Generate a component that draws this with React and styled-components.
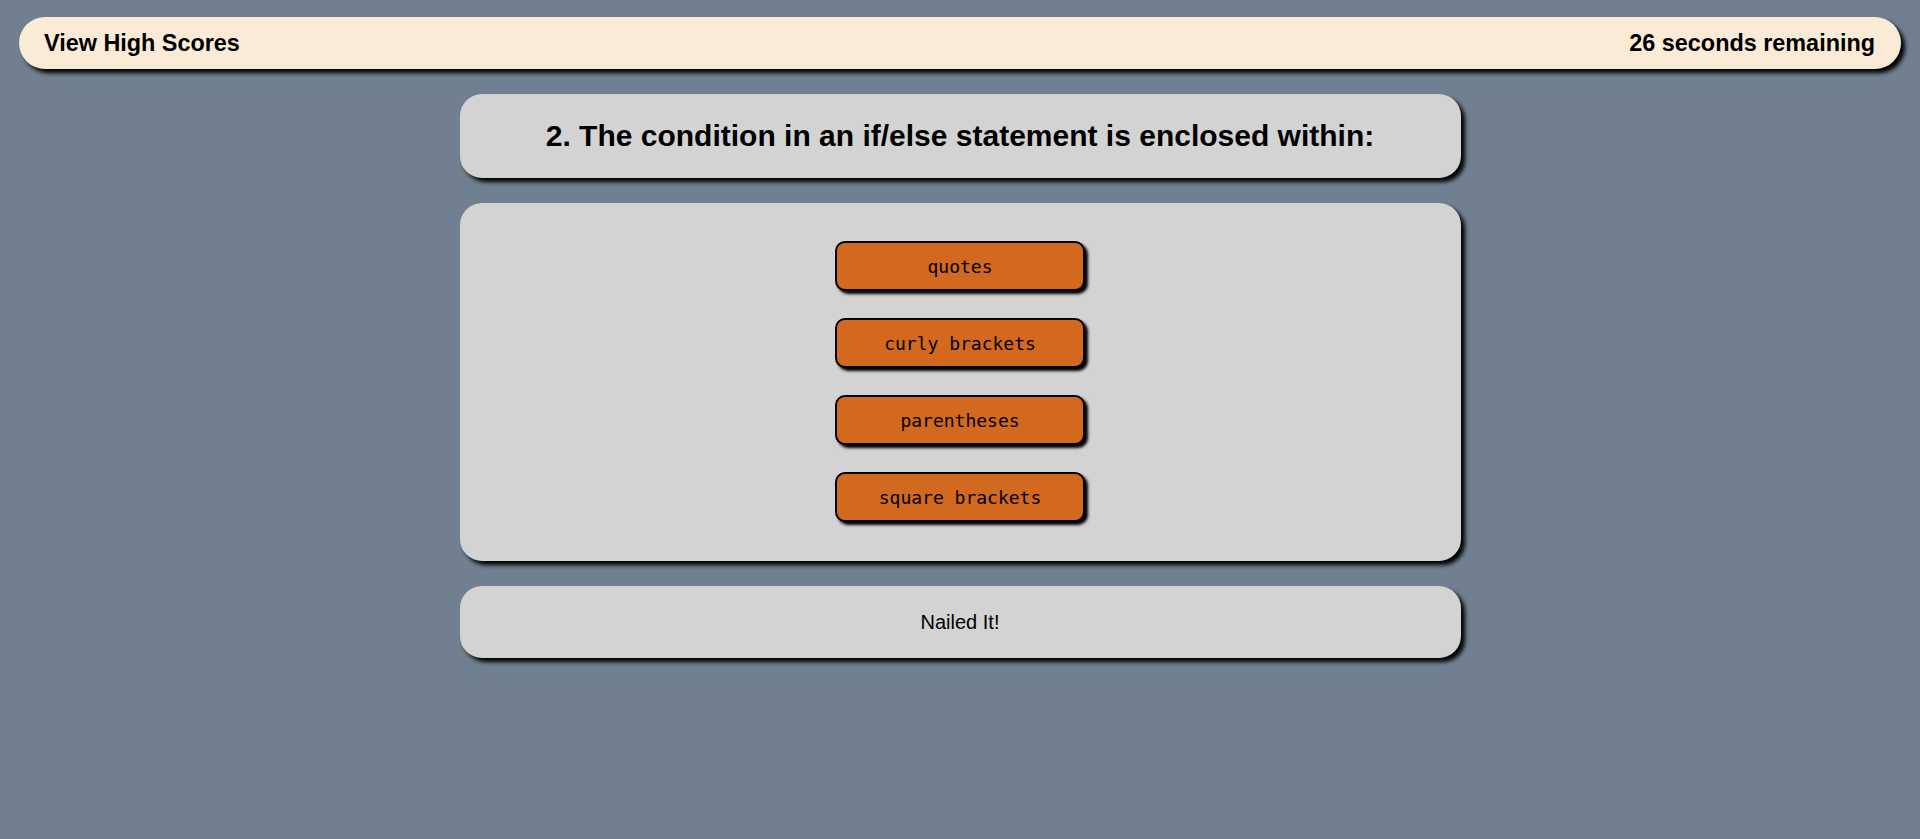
import React from 'react';
import styled, { createGlobalStyle } from 'styled-components';

const GlobalStyle = createGlobalStyle`
  html, body {
    margin: 0;
    padding: 0;
    background: #708090;
    font-family: "Liberation Sans", Arial, sans-serif;
  }
`;

const Page = styled.div`
  min-height: 839px;
  padding: 17px 19px;
  box-sizing: border-box;
  display: flex;
  flex-direction: column;
  align-items: center;
`;

const Header = styled.header`
  width: 100%;
  height: 52px;
  box-sizing: border-box;
  padding: 0 26px 0 25px;
  display: flex;
  align-items: center;
  justify-content: space-between;
  background: #faebd7;
  border-radius: 26px;
  box-shadow: 4px 4px 4px #000;
  font-weight: bold;
  font-size: 23.4px;
  color: #000;
`;

const Main = styled.main`
  width: 1001px;
  margin-top: 25px;
  display: flex;
  flex-direction: column;
  gap: 25px;
`;

const Card = styled.section`
  background: #d3d3d3;
  border-radius: 22px;
  box-shadow: 4px 4px 4px #000;
  display: flex;
  flex-direction: column;
  align-items: center;
  justify-content: center;
  min-height: ${p => p.$height || 'auto'};
  padding: ${p => p.$pad || '0'};
  box-sizing: border-box;
`;

const Question = styled.h2`
  margin: 0;
  font-size: 30px;
  font-weight: bold;
`;

const Choices = styled.div`
  display: flex;
  flex-direction: column;
  gap: 27px;
`;

const Choice = styled.button`
  width: 250px;
  height: 50px;
  background: #d2691e;
  border: 2px solid #000;
  border-radius: 10px;
  box-shadow: 3px 3px 3px #000;
  font-family: "DejaVu Sans Mono", "Liberation Mono", monospace;
  font-size: 18px;
  color: #000;
  cursor: pointer;
`;

const Result = styled.p`
  margin: 0;
  font-size: 20px;
`;

const choices = ['quotes', 'curly brackets', 'parentheses', 'square brackets'];

export default function App() {
  return (
    <>
      <GlobalStyle />
      <Page>
        <Header>
          <span>View High Scores</span>
          <span>26 seconds remaining</span>
        </Header>
        <Main>
          <Card $height="84px">
            <Question>2. The condition in an if/else statement is enclosed within:</Question>
          </Card>
          <Card $pad="38px 0 39px">
            <Choices>
              {choices.map(c => <Choice key={c}>{c}</Choice>)}
            </Choices>
          </Card>
          <Card $height="72px">
            <Result>Nailed It!</Result>
          </Card>
        </Main>
      </Page>
    </>
  );
}
